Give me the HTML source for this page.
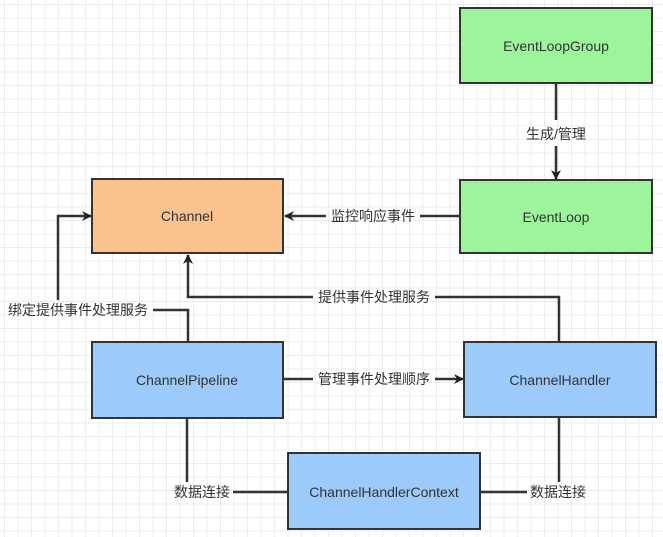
<!DOCTYPE html>
<html><head><meta charset="utf-8"><style>
body{margin:0;width:663px;height:537px;overflow:hidden;background:#fff;
background-image:linear-gradient(#ececec 1px,transparent 1px),linear-gradient(90deg,#ececec 1px,transparent 1px);
background-size:13.5px 13.5px;background-position:4px 4px;}
svg{position:absolute;left:0;top:0}
text{font-family:"Liberation Sans","Noto Sans CJK SC",sans-serif;font-size:14px;fill:#333}
</style></head><body>
<svg width="663" height="537" viewBox="0 0 663 537">
<defs><marker id="a" markerWidth="10" markerHeight="10" refX="9" refY="5" orient="auto" markerUnits="userSpaceOnUse"><path d="M0,0 L10,5 L0,10 L3,5z" fill="#222"/></marker></defs>
<g stroke="#333" stroke-width="2.5" fill="none">
<!-- Group -> EventLoop -->
<line x1="556" y1="83" x2="556" y2="120"/>
<line x1="556" y1="146" x2="556" y2="179" marker-end="url(#a)"/>
<!-- EventLoop -> Channel -->
<line x1="460" y1="216" x2="420" y2="216"/>
<line x1="326" y1="216" x2="285" y2="216" marker-end="url(#a)"/>
<!-- Handler -> Channel -->
<polyline points="559,342 559,297 435,297"/>
<polyline points="313,297 188,297 188,255" marker-end="url(#a)"/>
<!-- Pipeline -> Channel left -->
<polyline points="188,342 188,310 153,310"/>
<polyline points="58,300 58,216 91,216" marker-end="url(#a)"/>
<!-- Pipeline -> Handler -->
<line x1="283" y1="379" x2="313" y2="379"/>
<line x1="435" y1="379" x2="463" y2="379" marker-end="url(#a)"/>
<!-- data -->
<line x1="187" y1="418" x2="187" y2="482"/>
<line x1="233" y1="492" x2="288" y2="492"/>
<line x1="559" y1="418" x2="559" y2="482"/>
<line x1="480" y1="492" x2="527" y2="492"/>
</g>
<g stroke="#333" stroke-width="2">
<rect x="460" y="8" width="192" height="75" fill="#9cf59a"/>
<rect x="460" y="180" width="192" height="73" fill="#9cf59a"/>
<rect x="92" y="179" width="191" height="74" fill="#fac28e"/>
<rect x="92" y="342" width="191" height="76" fill="#9ccbfb"/>
<rect x="464" y="342" width="192" height="75" fill="#9ccbfb"/>
<rect x="288" y="453" width="192" height="76" fill="#9ccbfb"/>
</g>
<g text-anchor="middle">
<text x="556" y="51">EventLoopGroup</text>
<text x="556" y="222">EventLoop</text>
<text x="187" y="221">Channel</text>
<text x="187" y="385">ChannelPipeline</text>
<text x="560" y="385">ChannelHandler</text>
<text x="384" y="497">ChannelHandlerContext</text>
<text x="556" y="139">生成/管理</text>
<text x="373" y="221">监控响应事件</text>
<text x="374" y="302">提供事件处理服务</text>
<text x="374" y="384">管理事件处理顺序</text>
<text x="78" y="315">绑定提供事件处理服务</text>
<text x="202" y="497">数据连接</text>
<text x="558" y="497">数据连接</text>
</g>
</svg>
</body></html>
